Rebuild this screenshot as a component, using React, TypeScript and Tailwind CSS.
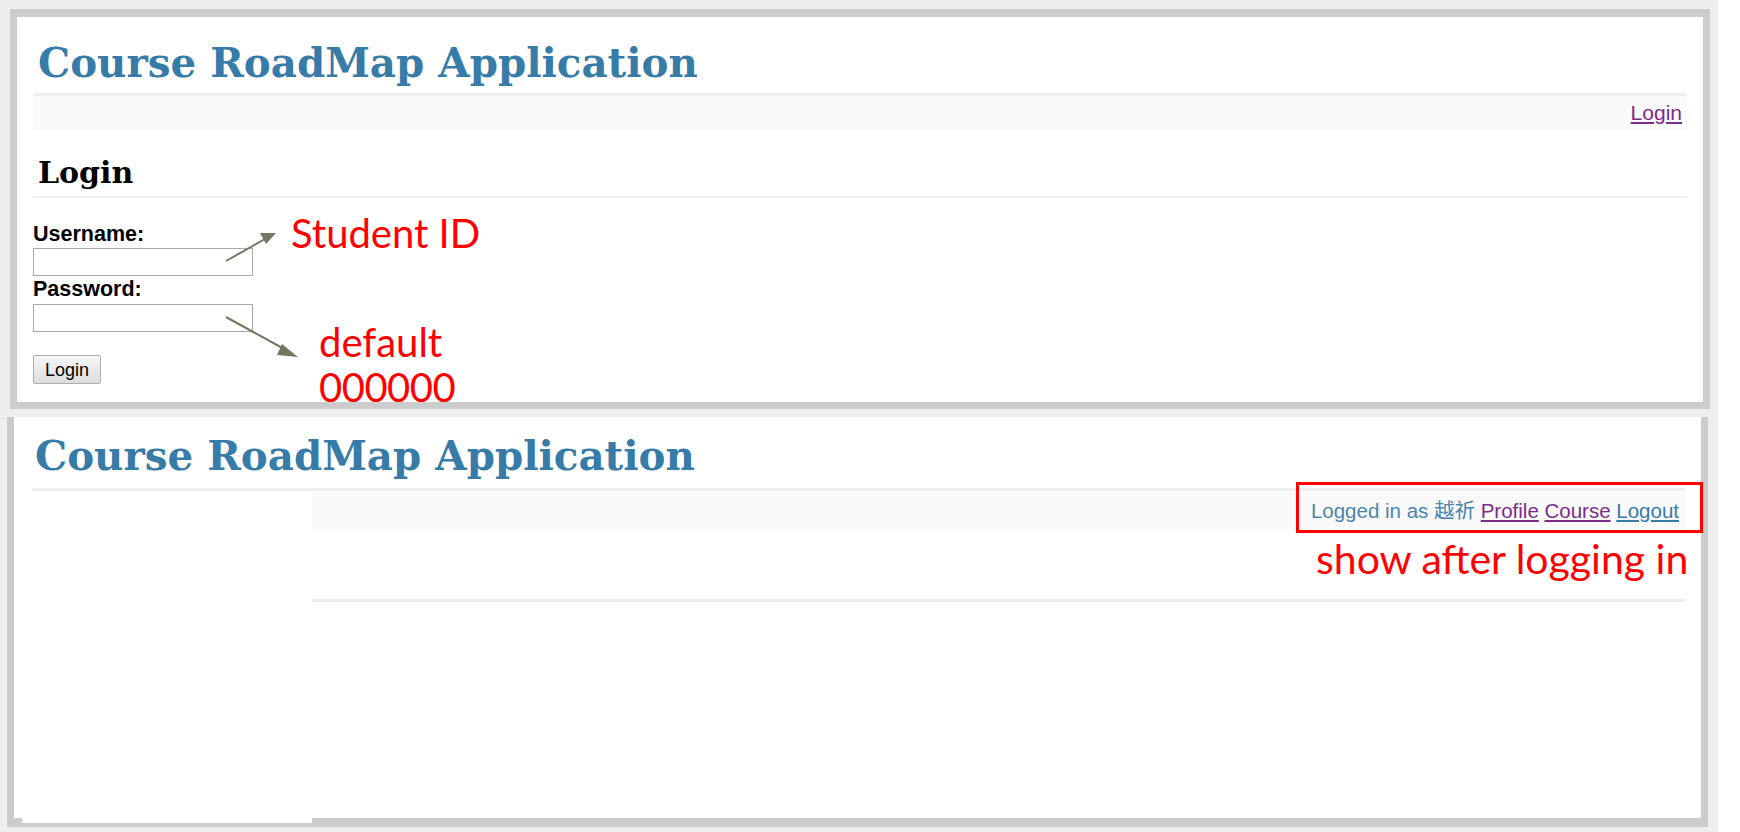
import React from 'react'

const serif = { fontFamily: '"DejaVu Serif", "Liberation Serif", serif' }

function Title({ className = '' }: { className?: string }) {
    return (
        <h1
            className={`font-bold text-[40.4px] leading-[48px] text-[#377ba8] border-b-[3px] border-[#eeeeee] whitespace-nowrap ${className}`}
            style={serif}
        >
            Course RoadMap Application
        </h1>
    )
}

function Arrows() {
    return (
        <svg
            className="absolute left-[183px] top-[203px]"
            width="110"
            height="150"
            viewBox="0 0 110 150"
            fill="none"
        >
            <line x1="26" y1="41" x2="65" y2="19" stroke="#77765f" strokeWidth="2" />
            <polygon points="76,13 60,13 66,24" fill="#77765f" />
            <line x1="26" y1="97" x2="86" y2="130" stroke="#77765f" strokeWidth="2" />
            <polygon points="98,137 82,124 77,135" fill="#77765f" />
        </svg>
    )
}

export default function App() {
    return (
        <div className="w-[1740px] h-[832px] bg-white overflow-hidden">
            <div
                className="w-[1718px] h-[832px] bg-[#eeeeee] pt-[9px] overflow-hidden"
                style={{ fontFamily: '"Liberation Sans", Arial, sans-serif' }}
            >
                {/* Top: login page */}
                <div className="relative ml-[10px] w-[1700px] h-[400px] bg-white border-[#cccccc] border-t-[8px] border-x-[7px] border-b-[7px] px-[16px]">
                    <Title className="mt-[22px] pl-[5px] pb-[6px]" />

                    <div className="h-[34px] bg-[#fafafa] pt-[5px] pr-[5px] text-right text-[21px] leading-[24px]">
                        <a href="#" className="text-[#7b2c8d] underline">Login</a>
                    </div>

                    <h2
                        className="mt-[25px] pl-[5px] pb-[5px] font-bold text-[30px] leading-[36px] text-black border-b-[2px] border-[#eeeeee]"
                        style={serif}
                    >
                        Login
                    </h2>

                    <form className="flex flex-col items-start">
                        <label className="mt-[24px] font-bold text-[21.5px] leading-[24px] text-black">Username:</label>
                        <input
                            type="text"
                            className="mt-[2px] w-[220px] h-[28px] border border-[#a9a9a9] bg-white outline-none"
                        />
                        <label className="mt-[1px] font-bold text-[21.5px] leading-[24px] text-black">Password:</label>
                        <input
                            type="password"
                            className="mt-[3px] w-[220px] h-[28px] border border-[#a9a9a9] bg-white outline-none"
                        />
                        <button
                            type="button"
                            className="mt-[23px] w-[68px] h-[29px] rounded-[2px] border border-[#adadad] bg-gradient-to-b from-[#f6f6f6] to-[#dedede] text-[18px] leading-[20px] text-black"
                        >
                            Login
                        </button>
                    </form>

                    {/* annotations */}
                    <Arrows />
                    <div
                        className="absolute left-[274px] top-[192px] text-[40px] leading-[48px] text-[#ff0000] whitespace-nowrap"
                        style={{ fontFamily: 'Lato, "Noto Sans", sans-serif' }}
                    >
                        Student ID
                    </div>
                    <div
                        className="absolute left-[302px] top-[303px] z-10 text-[40px] leading-[45px] text-[#ff0000]"
                        style={{ fontFamily: 'Lato, "Noto Sans", sans-serif' }}
                    >
                        <div>default</div>
                        <div className="tracking-[-0.5px]">000000</div>
                    </div>
                </div>

                {/* Bottom: after login */}
                <div className="relative mt-[8px] ml-[7px] w-[1701px] h-[410px] bg-white border-[#cccccc] border-x-[7px] border-b-[9px] flex flex-col">
                    <Title className="mt-[15px] ml-[18px] mr-[16px] pl-[3px] pb-[8px]" />

                    <div className="flex flex-1 ml-[8px] mr-[16px] mt-[2px]">
                        <div className="w-[290px] bg-white mb-[-5px]" />
                        <div className="flex-1 flex flex-col">
                            <div className="h-[36px] bg-[#fafafa] pt-[4px] pr-[6px] text-right text-[20.5px] leading-[24px] whitespace-nowrap">
                                <span className="text-[#4a85ad]">
                                    Logged in as{' '}
                                    <span style={{ fontFamily: '"Noto Sans CJK TC", "Noto Sans CJK SC", sans-serif' }}>越祈</span>
                                </span>{' '}
                                <a href="#" className="text-[#7b2c8d] underline">Profile</a>{' '}
                                <a href="#" className="text-[#7b2c8d] underline">Course</a>{' '}
                                <a href="#" className="text-[#377ba8] underline">Logout</a>
                            </div>
                            <div className="mt-[70px] border-t-[3px] border-[#eeeeee]" />
                        </div>
                    </div>

                    {/* annotation */}
                    <div className="absolute left-[1282px] top-[65px] w-[407px] h-[51px] border-[3px] border-[#ff0000]" />
                    <div
                        className="absolute left-[1302px] top-[118px] text-[41px] leading-[48px] text-[#ff0000] whitespace-nowrap"
                        style={{ fontFamily: 'Lato, "Noto Sans", sans-serif' }}
                    >
                        show after logging in
                    </div>
                </div>
            </div>
        </div>
    )
}
